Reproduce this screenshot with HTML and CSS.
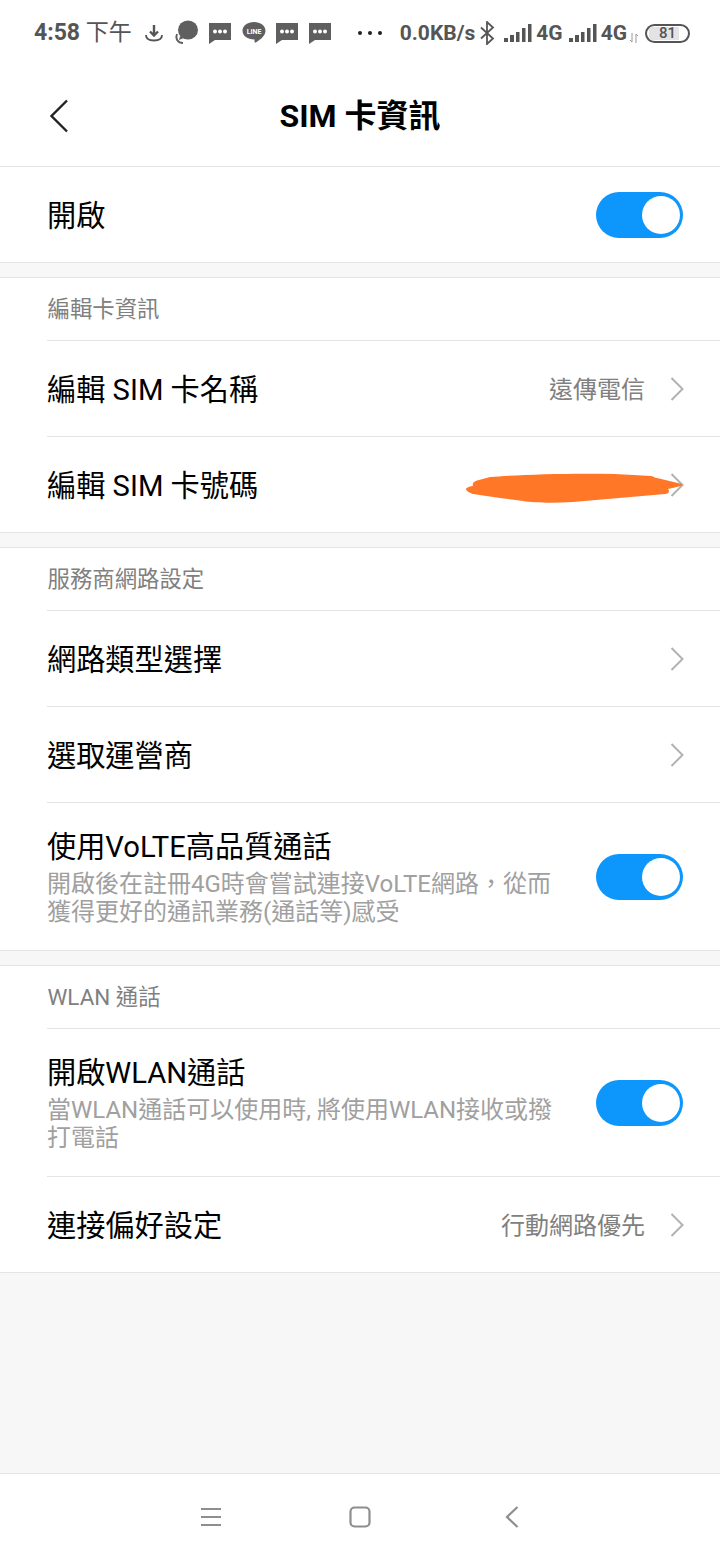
FILE: index.html
```html
<!DOCTYPE html>
<html lang="zh-Hant">

<head>
    <meta charset="UTF-8">
    <meta name="viewport" content="width=device-width, initial-scale=1.0">
    <title>SIM 卡資訊</title>
    <link rel="stylesheet" href="styles.css">
</head>

<body>
    <div class="phone">
        <div class="status-bar">
            <div class="status-left">
                <span class="time"><b>4:58</b> 下午</span>
                <svg class="note note-dl" width="20" height="20" viewBox="0 0 20 20"><path d="M10 2v10M6 8.500l4 4 4-4" fill="none" stroke="#555" stroke-width="2.400"/><path d="M2 12c0 4 3.500 5.500 8 5.500s8-1.500 8-5.500" fill="none" stroke="#555" stroke-width="1.800"/></svg>
                <svg class="note" width="26" height="26" viewBox="0 0 26 26"><ellipse cx="15" cy="10" rx="10" ry="9.500" fill="#5f5f5f"/><path d="M7 16l-1 4 5-2z" fill="#5f5f5f"/><path d="M4 14c-2 5 1 9 6 9" fill="none" stroke="#5f5f5f" stroke-width="1.800"/></svg>
                <svg class="note" width="24" height="24" viewBox="0 0 24 24"><path d="M1 2h22v17H7l-6 4z" fill="#5f5f5f"/><circle cx="7" cy="10.500" r="2" fill="#fff"/><circle cx="12" cy="10.500" r="2" fill="#fff"/><circle cx="17" cy="10.500" r="2" fill="#fff"/></svg>
                <svg class="note note-line" width="24" height="24" viewBox="0 0 24 24"><path d="M12 1c6.500 0 11.500 3.800 11.500 8.800 0 5-5 8.700-9 11.200-1.500 1-2 .5-2-.5v-2C5.500 18.500.5 15 .5 9.800.5 4.800 5.500 1 12 1z" fill="#5f5f5f"/><text x="12" y="12.500" class="line-text">LINE</text></svg>
                <svg class="note" width="24" height="24" viewBox="0 0 24 24"><path d="M1 2h22v17H7l-6 4z" fill="#5f5f5f"/><circle cx="7" cy="10.500" r="2" fill="#fff"/><circle cx="12" cy="10.500" r="2" fill="#fff"/><circle cx="17" cy="10.500" r="2" fill="#fff"/></svg>
                <svg class="note" width="24" height="24" viewBox="0 0 24 24"><path d="M1 2h22v17H7l-6 4z" fill="#5f5f5f"/><circle cx="7" cy="10.500" r="2" fill="#fff"/><circle cx="12" cy="10.500" r="2" fill="#fff"/><circle cx="17" cy="10.500" r="2" fill="#fff"/></svg>
                <svg class="note note-more" width="26" height="6" viewBox="0 0 26 6"><circle cx="3" cy="3" r="2" fill="#222"/><circle cx="13" cy="3" r="2" fill="#222"/><circle cx="23" cy="3" r="2" fill="#222"/></svg>
            </div>
            <div class="status-right">
                <span class="speed">0.0KB/s</span>
                <svg class="bt" width="16" height="24" viewBox="0 0 16 24"><path d="M2 6.500l12 11-6 5.500V1l6 5.500-12 11" fill="none" stroke="#555" stroke-width="1.800"/></svg>
                <svg class="signal" width="28" height="20" viewBox="0 0 28 20"><path d="M0 15h4v4H0zM6 12h4v7H6zM12 9h3.500v10H12zM18 5h3.500v14H18zM24 1h3.500v18H24z" fill="#555"/></svg>
                <span class="net">4G</span>
                <svg class="signal signal-2" width="28" height="20" viewBox="0 0 28 20"><path d="M0 15h4v4H0zM6 12h4v7H6zM12 9h3.500v10H12zM18 5h3.500v14H18zM24 1h3.500v18H24z" fill="#555"/></svg>
                <span class="net">4G</span>
                <svg class="updown" width="8" height="10" viewBox="0 0 8 10"><path d="M2 0v9M0 7l2 2M6 10V1M6 1l2 2" fill="none" stroke="#999" stroke-width="1"/></svg>
                <div class="battery"><div class="battery-fill"></div><span>81</span></div>
            </div>
        </div>

        <header class="title-bar">
            <svg class="back" width="20" height="34" viewBox="0 0 20 34"><path d="M18 1.500L2.500 17 18 32.500" fill="none" stroke="#222" stroke-width="2.400"/></svg>
            <h1>SIM 卡資訊</h1>
        </header>

        <section class="group group-first">
            <div class="row">
                <div class="row-title">開啟</div>
                <div class="toggle"></div>
            </div>
        </section>

        <section class="group">
            <div class="group-label">編輯卡資訊</div>
            <div class="row">
                <div class="row-title">編輯 SIM 卡名稱</div>
                <span class="row-value">遠傳電信</span>
                <svg class="chevron" width="14" height="24" viewBox="0 0 14 24"><path d="M1.500 1L12.500 12 1.500 23" fill="none" stroke="#b2b2b2" stroke-width="2"/></svg>
            </div>
            <div class="row">
                <div class="row-title">編輯 SIM 卡號碼</div>
                <svg class="chevron" width="14" height="24" viewBox="0 0 14 24"><path d="M1.500 1L12.500 12 1.500 23" fill="none" stroke="#b2b2b2" stroke-width="2"/></svg>
                <svg class="scribble" width="218" height="30" viewBox="0 0 218 30"><path d="M1 16C2 14 6 13 8 13 7 10 9 8 14 7L25 4C50 2 100 0 150 1L186 3C190 4 190 5 192 5L217 11C218 12 217 13 216 13L203 16C205 18 204 21 200 21L108 29C90 30 70 30 58 28L35 25 8 21C5 20 1 18 1 16z" fill="#ff7727"/></svg>
            </div>
        </section>

        <section class="group">
            <div class="group-label">服務商網路設定</div>
            <div class="row">
                <div class="row-title">網路類型選擇</div>
                <svg class="chevron" width="14" height="24" viewBox="0 0 14 24"><path d="M1.500 1L12.500 12 1.500 23" fill="none" stroke="#b2b2b2" stroke-width="2"/></svg>
            </div>
            <div class="row">
                <div class="row-title">選取運營商</div>
                <svg class="chevron" width="14" height="24" viewBox="0 0 14 24"><path d="M1.500 1L12.500 12 1.500 23" fill="none" stroke="#b2b2b2" stroke-width="2"/></svg>
            </div>
            <div class="row row-tall">
                <div class="row-text">
                    <div class="row-title">使用VoLTE高品質通話</div>
                    <div class="row-sub">開啟後在註冊4G時會嘗試連接VoLTE網路，從而獲得更好的通訊業務(通話等)感受</div>
                </div>
                <div class="toggle"></div>
            </div>
        </section>

        <section class="group">
            <div class="group-label">WLAN 通話</div>
            <div class="row row-tall">
                <div class="row-text">
                    <div class="row-title">開啟WLAN通話</div>
                    <div class="row-sub">當WLAN通話可以使用時, 將使用WLAN接收或撥打電話</div>
                </div>
                <div class="toggle"></div>
            </div>
            <div class="row">
                <div class="row-title">連接偏好設定</div>
                <span class="row-value">行動網路優先</span>
                <svg class="chevron" width="14" height="24" viewBox="0 0 14 24"><path d="M1.500 1L12.500 12 1.500 23" fill="none" stroke="#b2b2b2" stroke-width="2"/></svg>
            </div>
        </section>

        <nav class="nav-bar">
            <svg class="nav-menu" width="22" height="20" viewBox="0 0 22 20"><path d="M1 2h20M1 10h20M1 18h20" fill="none" stroke="#8e8e8e" stroke-width="2"/></svg>
            <svg class="nav-home" width="22" height="22" viewBox="0 0 22 22"><rect x="1.500" y="1.500" width="19" height="19" rx="4" fill="none" stroke="#8e8e8e" stroke-width="2.200"/></svg>
            <svg class="nav-back" width="14" height="22" viewBox="0 0 14 22"><path d="M12.500 1L2 11l10.500 10" fill="none" stroke="#8e8e8e" stroke-width="2.200"/></svg>
        </nav>
    </div>
</body>

</html>
```

FILE: styles.css
```css
* {
    box-sizing: border-box;
}

html,
body {
    margin: 0;
    padding: 0;
}

body {
    font-family: Roboto, "Noto Sans CJK TC", sans-serif;
    background-color: #f7f7f7;
    color: #000;
}

.phone {
    width: 720px;
    height: 1560px;
    display: flex;
    flex-direction: column;
}

/* status bar */
.status-bar {
    height: 66px;
    padding: 0 30px 0 34px;
    background-color: #fff;
    display: flex;
    justify-content: space-between;
    align-items: center;
    color: #555;
}

.status-left,
.status-right {
    display: flex;
    align-items: center;
}

.time {
    font-size: 23px;
    line-height: 30px;
    margin-right: 12px;
}

.time b {
    font-size: 23px;
    font-weight: 700;
}

.note {
    margin-right: 9px;
}

.note-line {
    margin-left: 1px;
}

.note-more {
    margin-left: 16px;
    margin-right: 0;
}

.line-text {
    font-size: 7px;
    font-weight: 700;
    fill: #fff;
    text-anchor: middle;
}

.speed,
.net {
    font-size: 21px;
    font-weight: 700;
}

.bt {
    margin-left: 4px;
}

.signal {
    margin-left: 9px;
    margin-right: 4px;
}

.signal-2 {
    margin-left: 6px;
}

.updown {
    margin-left: 3px;
    margin-top: 10px;
}

.battery {
    position: relative;
    width: 45px;
    height: 19px;
    margin-left: 7px;
    border: 2px solid #555;
    border-radius: 10px;
    overflow: hidden;
    text-align: center;
    font-size: 15px;
    line-height: 15px;
    font-weight: 500;
}

.battery-fill {
    position: absolute;
    top: 1px;
    left: 2px;
    bottom: 1px;
    width: 30px;
    background-color: #e3e3e3;
}

.battery span {
    position: relative;
}

/* title */
.title-bar {
    position: relative;
    height: 101px;
    background-color: #fff;
    border-bottom: 1px solid #e4e4e4;
    display: flex;
    align-items: center;
    justify-content: center;
    padding-bottom: 6px;
}

.back {
    position: absolute;
    left: 49px;
    top: 33px;
}

.title-bar h1 {
    margin: 0;
    font-size: 32px;
    font-weight: 700;
}

/* groups */
.group {
    background-color: #fff;
    border-top: 1px solid #e4e4e4;
    border-bottom: 1px solid #e4e4e4;
    margin-bottom: 14px;
    padding-left: 47.500px;
}

.group-first {
    border-top: none;
}

.group-label {
    height: 62px;
    font-size: 22.4px;
    line-height: 63px;
    color: #808080;
}

.row {
    position: relative;
    min-height: 96px;
    margin-left: -0.500px;
    padding: 0 36px 0 0;
    border-top: 1px solid #e4e4e4;
    display: flex;
    align-items: center;
}

.group-first .row {
    border-top: none;
    min-height: 95px;
}

.row-tall {
    min-height: 148px;
}

.row-text {
    flex: 1;
    padding-top: 2px;
    padding-right: 30px;
}

.row-title {
    flex: 1;
    font-size: 29.2px;
    line-height: 34px;
}

.row > .row-title {
    padding-top: 2px;
}

.row-sub {
    margin-top: 6px;
    font-size: 24px;
    line-height: 28px;
    color: #a0a0a0;
}

.row-value {
    font-size: 24px;
    color: #808080;
    margin-right: 25px;
    padding-bottom: 3px;
}

.chevron {
    display: block;
}

.scribble {
    position: absolute;
    left: 418px;
    top: 36px;
}

.toggle {
    position: relative;
    width: 87px;
    height: 46px;
    margin-right: 1px;
    border-radius: 23px;
    background-color: #0d96fb;
    flex-shrink: 0;
}

.toggle::after {
    content: "";
    position: absolute;
    top: 4px;
    right: 3px;
    width: 38px;
    height: 38px;
    border-radius: 50%;
    background-color: #fff;
}

/* nav */
.nav-bar {
    margin-top: auto;
    height: 87px;
    padding-left: 200px;
    background-color: #fff;
    border-top: 1px solid #e4e4e4;
    display: flex;
    align-items: center;
}

.nav-home {
    margin-left: 127px;
}

.nav-back {
    margin-left: 134px;
}
```
